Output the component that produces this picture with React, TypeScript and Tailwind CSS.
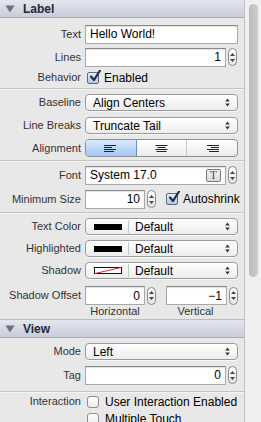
import React from "react";

const ui = "font-['Lucida_Grande','Liberation_Sans','Arial',sans-serif]";

const Arrows = () => (
  <svg width="5" height="9" viewBox="0 0 5 9" className="shrink-0">
    <path d="M2.5 0.5 L4.8 3.5 L0.2 3.5 Z" fill="#333" />
    <path d="M2.5 8.5 L4.8 5.5 L0.2 5.5 Z" fill="#333" />
  </svg>
);

const Stepper = () => (
  <div className="ml-[2px] flex h-[18px] w-[9px] shrink-0 flex-col items-center justify-center gap-[3px] rounded-full border border-[#8c8c8c] bg-gradient-to-b from-white to-[#e6e6e6]">
    <svg width="5" height="3" viewBox="0 0 5 3">
      <path d="M2.5 0 L5 3 L0 3 Z" fill="#444" />
    </svg>
    <svg width="5" height="3" viewBox="0 0 5 3">
      <path d="M2.5 3 L5 0 L0 0 Z" fill="#444" />
    </svg>
  </div>
);

const Field = ({ value, w, right = false, children }: { value: string; w: string; right?: boolean; children?: React.ReactNode }) => (
  <div
    className={`flex h-[19px] ${w} shrink-0 items-center border border-[#a8a8a8] border-t-[#8a8a8a] bg-white px-[4px] text-[12px] text-black shadow-[inset_0_1px_1px_rgba(0,0,0,0.12)] ${right ? "justify-end" : "justify-between"}`}
  >
    <span className="whitespace-nowrap">{value}</span>
    {children}
  </div>
);

const Popup = ({ children }: { children: React.ReactNode }) => (
  <div className="flex h-[17px] w-[153px] items-center justify-between rounded-[4px] border border-[#9b9b9b] bg-gradient-to-b from-white to-[#ededed] pl-[7px] pr-[7px] text-[12px] text-black shadow-[0_1px_0_rgba(255,255,255,0.7)]">
    <div className="flex items-center whitespace-nowrap">{children}</div>
    <Arrows />
  </div>
);

const Check = ({ on }: { on: boolean }) =>
  on ? (
    <div className="relative flex h-[12px] w-[12px] shrink-0 items-center justify-center rounded-[2px] border border-[#5a6a88] bg-gradient-to-b from-[#e9eef8] to-[#b7c5dd]">
      <svg width="12" height="12" viewBox="0 0 12 12" className="absolute -top-[3px] left-[1px]">
        <path d="M2 6.5 L5 10 L11 0.5" fill="none" stroke="#1b2d52" strokeWidth="2.2" strokeLinecap="round" strokeLinejoin="round" />
      </svg>
    </div>
  ) : (
    <div className="h-[12px] w-[12px] shrink-0 rounded-[3px] border border-[#8e8e8e] bg-gradient-to-b from-white to-[#ececec]" />
  );

const Row = ({ label, h, children }: { label: string; h: string; children?: React.ReactNode }) => (
  <div className={`flex ${h} items-center`}>
    <div className="w-[81px] shrink-0 whitespace-nowrap text-right text-[11px] text-[#333]">{label}</div>
    <div className="ml-[4px] flex items-center">{children}</div>
  </div>
);

const Header = ({ title }: { title: string }) => (
  <div className="flex h-[18px] items-center border-b border-[#a9adb8] bg-gradient-to-b from-[#e4e7ee] to-[#c8cdd9] pl-[5px]">
    <svg width="10" height="8" viewBox="0 0 10 8">
      <path d="M0.5 0.5 L9.5 0.5 L5 7.5 Z" fill="#6e7280" />
    </svg>
    <span className="ml-[8px] text-[12px] font-bold text-[#23293a]">{title}</span>
  </div>
);

const Divider = () => <div className="h-[2px] border-t border-[#c4c4c4] bg-[#f3f3f3]" />;

const AlignIcon = ({ kind }: { kind: "l" | "c" | "r" }) => {
  const rows = [12, 8, 12, 10];
  return (
    <svg width="13" height="7" viewBox="0 0 13 7">
      {rows.map((w, i) => {
        const x = kind === "l" ? 0 : kind === "r" ? 13 - w : (13 - w) / 2;
        return <rect key={i} x={x} y={i * 2} width={w} height="1" fill="#222" />;
      })}
    </svg>
  );
};

const Segmented = () => (
  <div className="flex h-[18px] w-[153px] overflow-hidden rounded-[4px] border border-[#8f8f8f] bg-gradient-to-b from-white to-[#ececec]">
    <div className="flex flex-1 items-center justify-center border-r border-[#6b8ec4] bg-gradient-to-b from-[#dcebfd] to-[#9fc6f4]">
      <AlignIcon kind="l" />
    </div>
    <div className="flex flex-1 items-center justify-center border-r border-[#c8c8c8]">
      <AlignIcon kind="c" />
    </div>
    <div className="flex flex-1 items-center justify-center">
      <AlignIcon kind="r" />
    </div>
  </div>
);

const Swatch = ({ kind }: { kind: "black" | "none" }) => (
  <div className="flex items-center">
    {kind === "black" ? (
      <div className="ml-[1px] h-[6px] w-[28px] bg-black" />
    ) : (
      <svg width="28" height="7" viewBox="0 0 28 7" className="ml-[1px]">
        <rect x="0.5" y="0.5" width="27" height="6" fill="white" stroke="#111" />
        <path d="M1 6.5 L27 0.5" stroke="#e0262b" strokeWidth="1" />
      </svg>
    )}
    <div className="ml-[6px] h-[13px] w-px bg-[#c6c6c6]" />
    <span className="ml-[6px]">Default</span>
  </div>
);

export default function App() {
  return (
    <div className={`flex h-[422px] w-[261px] overflow-hidden bg-[#e8e8e8] ${ui}`}>
      <div className="w-[245px] shrink-0 border-r border-[#c4c4c4]">
        <Header title="Label" />
        <div className="pt-[6px]">
          <Row label="Text" h="h-[20px]">
            <Field value="Hello World!" w="w-[153px]" />
          </Row>
          <div className="h-[3px]" />
          <Row label="Lines" h="h-[20px]">
            <Field value="1" w="w-[141px]" right />
            <Stepper />
          </Row>
          <Row label="Behavior" h="h-[21px]">
            <div className="ml-[2px] flex items-center gap-[5px] text-[12px] text-black">
              <Check on />
              <span>Enabled</span>
            </div>
          </Row>
        </div>
        <Divider />
        <div className="pt-[3px]">
          <Row label="Baseline" h="h-[19px]">
            <Popup>Align Centers</Popup>
          </Row>
          <div className="h-[4px]" />
          <Row label="Line Breaks" h="h-[19px]">
            <Popup>Truncate Tail</Popup>
          </Row>
          <div className="h-[3px]" />
          <Row label="Alignment" h="h-[20px]">
            <Segmented />
          </Row>
        </div>
        <div className="h-[2px]" />
        <Divider />
        <div className="pt-[3px]">
          <Row label="Font" h="h-[20px]">
            <Field value="System 17.0" w="w-[141px]">
              <div className="flex h-[13px] w-[15px] items-center justify-center rounded-[2px] border border-[#777] bg-gradient-to-b from-[#f4f4f4] to-[#d8d8d8] font-['Liberation_Serif',serif] text-[12px] leading-none text-[#555]">
                T
              </div>
            </Field>
            <Stepper />
          </Row>
          <div className="h-[4px]" />
          <Row label="Minimum Size" h="h-[20px]">
            <Field value="10" w="w-[60px]" right />
            <Stepper />
            <div className="ml-[10px] flex items-center gap-[5px] whitespace-nowrap text-[12px] text-black">
              <Check on />
              <span>Autoshrink</span>
            </div>
          </Row>
        </div>
        <div className="h-[3px]" />
        <Divider />
        <div className="pt-[3px]">
          <Row label="Text Color" h="h-[19px]">
            <Popup>
              <Swatch kind="black" />
            </Popup>
          </Row>
          <div className="h-[3px]" />
          <Row label="Highlighted" h="h-[19px]">
            <Popup>
              <Swatch kind="black" />
            </Popup>
          </Row>
          <div className="h-[3px]" />
          <Row label="Shadow" h="h-[19px]">
            <Popup>
              <Swatch kind="none" />
            </Popup>
          </Row>
          <div className="h-[6px]" />
          <Row label="Shadow Offset" h="h-[19px]">
            <Field value="0" w="w-[60px]" right />
            <Stepper />
            <div className="w-[10px]" />
            <Field value="−1" w="w-[61px]" right />
            <Stepper />
          </Row>
          <div className="ml-[85px] flex h-[13px] items-center text-[11px] text-[#333]">
            <span className="w-[60px] text-center">Horizontal</span>
            <span className="ml-[20px] w-[61px] text-center">Vertical</span>
          </div>
        </div>
        <div className="h-[1px]" />
        <div className="border-t border-[#b9bcc4]">
          <Header title="View" />
        </div>
        <div className="pt-[4px]">
          <Row label="Mode" h="h-[19px]">
            <Popup>Left</Popup>
          </Row>
          <div className="h-[4px]" />
          <Row label="Tag" h="h-[20px]">
            <Field value="0" w="w-[141px]" right />
            <Stepper />
          </Row>
        </div>
        <div className="h-[6px]" />
        <Divider />
        <div>
          <Row label="Interaction" h="h-[17px]">
            <div className="ml-[2px] flex items-center gap-[6px] whitespace-nowrap text-[12px] text-black">
              <Check on={false} />
              <span>User Interaction Enabled</span>
            </div>
          </Row>
          <Row label="" h="h-[18px]">
            <div className="ml-[2px] flex items-center gap-[6px] whitespace-nowrap text-[12px] text-black">
              <Check on={false} />
              <span>Multiple Touch</span>
            </div>
          </Row>
        </div>
      </div>
      <div className="w-[16px] shrink-0 bg-[#efefef] pt-[4px]">
        <div className="mx-auto h-[273px] w-[9px] rounded-full bg-gradient-to-r from-[#bdbdbd] to-[#cdcdcd]" />
      </div>
    </div>
  );
}
